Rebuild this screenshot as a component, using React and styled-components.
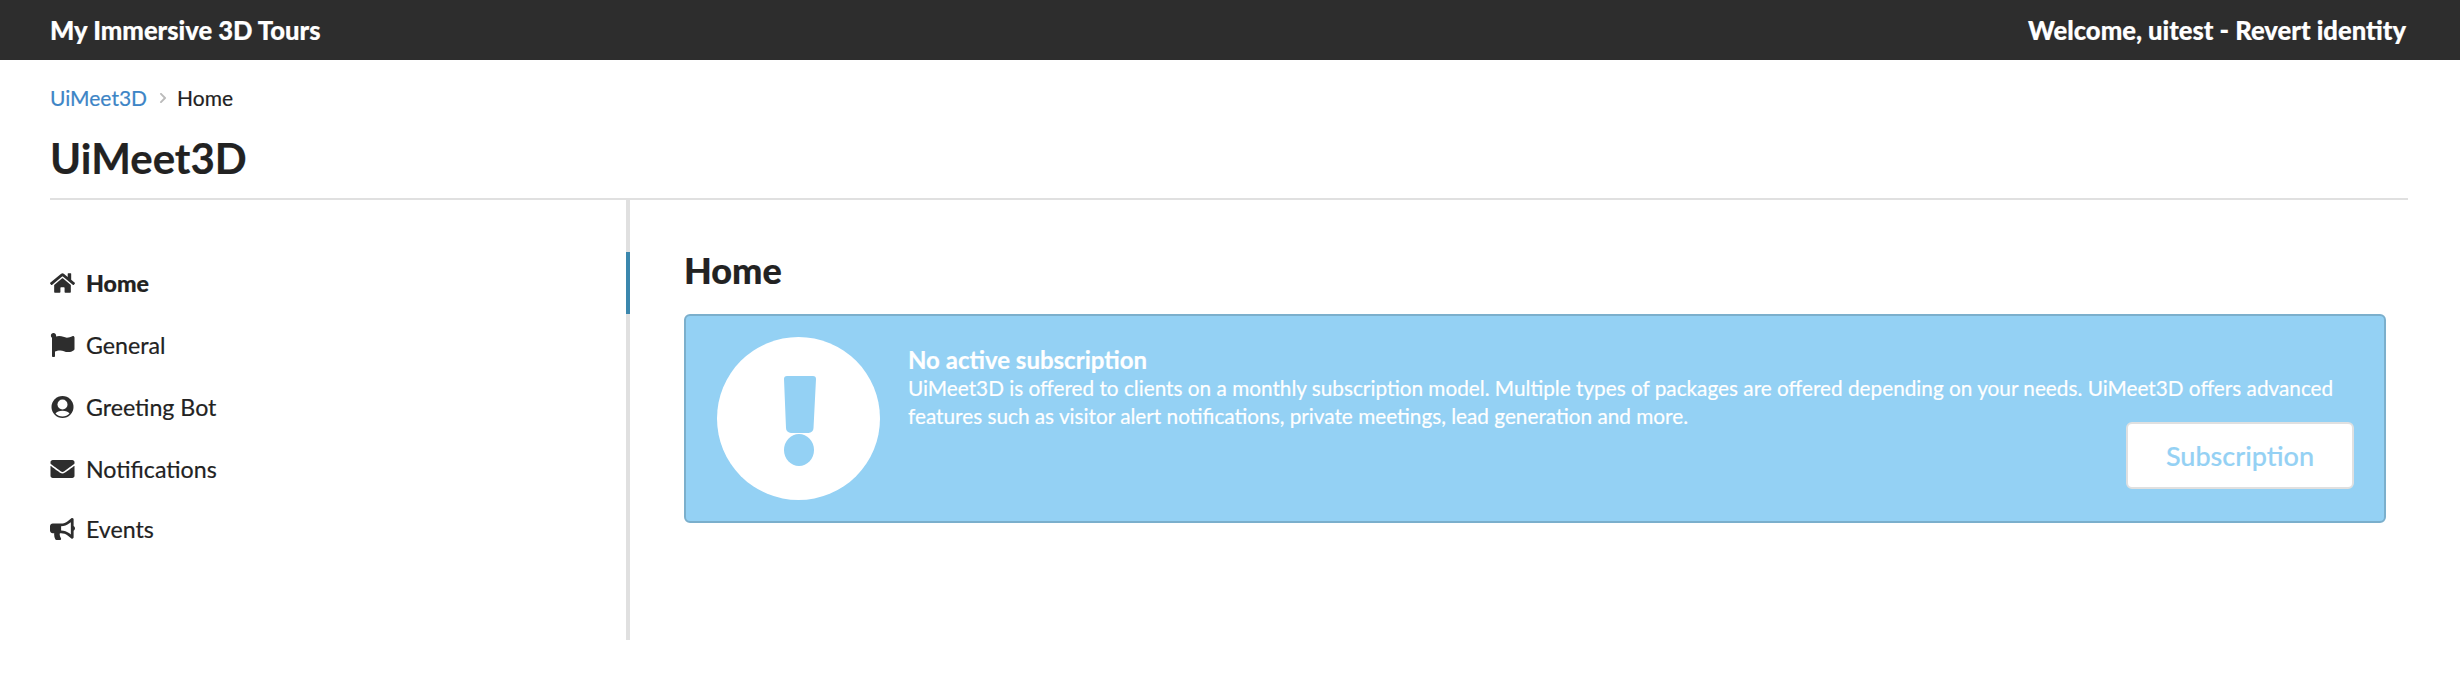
import React from 'react';
import styled, { createGlobalStyle } from 'styled-components';
import { FaHome, FaFlag, FaEnvelope, FaBullhorn, FaChevronRight } from 'react-icons/fa';

const GlobalStyle=createGlobalStyle`
  html, body {
    margin: 0;
    padding: 0;
    background: #fff;
  }
  body {
    font-family: Lato, "Liberation Sans", sans-serif;
    color: #222;
    -webkit-text-stroke: 0.2px currentColor;
  }
`;

const TopBar=styled.header`
  height: 60px;
  background: #2d2d2d;
  color: #fff;
  display: flex;
  justify-content: space-between;
  align-items: center;
  padding: 0 54px 0 50px;
  font-size: 25.6px;
  font-weight: 900;
`;

const PageHead=styled.div`
  margin: 0 52px 0 50px;
  padding-top: 26px;
  border-bottom: 2px solid #e0e0e0;
  height: 112px;
`;

const Breadcrumb=styled.nav`
  display: flex;
  align-items: center;
  font-size: 21px;
  line-height: 24px;
  color: #222;
`;

const Crumb=styled.a`
  color: #3d85c6;
  text-decoration: none;
`;

const Separator=styled(FaChevronRight)`
  width: 8px;
  height: 12px;
  color: #bbb;
  margin: 0 10px 0 12px;
`;

const SiteTitle=styled.h1`
  margin: 24px 0 0;
  font-size: 42px;
  line-height: 48px;
  font-weight: 700;
  color: #222;
`;

const Body=styled.div`
  display: flex;
  align-items: flex-start;
  margin-left: 50px;
  margin-right: 74px;
`;

const Side=styled.aside`
  position: relative;
  box-sizing: border-box;
  flex: none;
  width: 580px;
  height: 440px;
  border-right: 4px solid #e0e0e0;
  padding-top: 52px;
`;

const Marker=styled.span`
  position: absolute;
  right: -4px;
  top: 52px;
  width: 4px;
  height: 62px;
  background: #3b87ad;
`;

const NavItem=styled.a`
  display: flex;
  align-items: center;
  height: 62px;
  font-size: 23.2px;
  font-weight: ${props => (props.$active ? 900 : 400)};
  color: #222;
  &:last-child {
    height: 58px;
  }
  svg {
    width: 25px;
    height: 24px;
    margin-right: 11px;
    flex: none;
    color: #2d2d2d;
  }
`;

const Main=styled.main`
  flex: 1;
  padding-left: 54px;
`;

const Heading=styled.h2`
  margin: 48px 0 0;
  font-size: 36px;
  line-height: 44px;
  font-weight: 900;
  color: #222;
`;

const Alert=styled.section`
  box-sizing: border-box;
  height: 209px;
  margin-top: 22px;
  display: flex;
  background: #94d1f4;
  border: 2px solid #7bafcc;
  border-radius: 6px;
  padding: 21px 30px 0 31px;
  color: #fff;
`;

const AlertIcon=styled.svg`
  width: 163px;
  height: 163px;
  flex: none;
  margin-right: 28px;
`;

const AlertBody=styled.div`
  flex: 1;
  display: flex;
  flex-direction: column;
  padding-top: 9px;
  font-size: 20.75px;
  line-height: 28px;
`;

const AlertTitle=styled.strong`
  font-size: 24px;
  line-height: 28px;
  font-weight: 700;
`;

const SubscribeButton=styled.button`
  align-self: flex-end;
  margin-top: -8px;
  width: 228px;
  height: 67px;
  background: #fff;
  border: 2px solid #e0e0e0;
  border-radius: 6px;
  color: #94d1f4;
  font-family: inherit;
  font-size: 27px;
  font-weight: 500;
`;

// ring with a cut out head and a thin crescent for the shoulders
const BotIcon=() => (
  <svg viewBox="0 0 25 24">
    <circle cx="12.5" cy="12" r="11" fill="currentColor"/>
    <circle cx="12.5" cy="9.5" r="5" fill="#fff"/>
    <path d="M5.500 18.500c1.500-1.800 3.500-2.700 7-2.700s5.500.9 7 2.700c-1.800 1.900-4.200 3-7 3s-5.200-1.100-7-3z" fill="#fff"/>
  </svg>
);

const navItems=[
  { label: 'Home', Icon: FaHome, active: true },
  { label: 'General', Icon: FaFlag },
  { label: 'Greeting Bot', Icon: BotIcon },
  { label: 'Notifications', Icon: FaEnvelope },
  { label: 'Events', Icon: FaBullhorn }
];

export default function App(){
  return (
    <>
      <GlobalStyle/>
      <TopBar>
        <span>My Immersive 3D Tours</span>
        <span>Welcome, uitest - Revert identity</span>
      </TopBar>
      <PageHead>
        <Breadcrumb>
          <Crumb href="#">UiMeet3D</Crumb>
          <Separator/>
          <span>Home</span>
        </Breadcrumb>
        <SiteTitle>UiMeet3D</SiteTitle>
      </PageHead>
      <Body>
        <Side>
          <Marker/>
          {navItems.map(({ label, Icon, active }) => (
            <NavItem key={label} $active={active}>
              <Icon/>
              {label}
            </NavItem>
          ))}
        </Side>
        <Main>
          <Heading>Home</Heading>
          <Alert>
            <AlertIcon viewBox="0 0 163 163">
              <circle cx="81.5" cy="81.5" r="81.5" fill="#fff"/>
              <path d="M70 39h26a3 3 0 0 1 3 3l-2.500 49a5 5 0 0 1-5 5H74a5 5 0 0 1-5-5L67 42a3 3 0 0 1 3-3z" fill="#94d1f4"/>
              <ellipse cx="82" cy="113" rx="15" ry="16" fill="#94d1f4"/>
            </AlertIcon>
            <AlertBody>
              <AlertTitle>No active subscription</AlertTitle>
              <span>UiMeet3D is offered to clients on a monthly subscription model. Multiple types of packages are offered depending on your needs. UiMeet3D offers advanced features such as visitor alert notifications, private meetings, lead generation and more.</span>
              <SubscribeButton>Subscription</SubscribeButton>
            </AlertBody>
          </Alert>
        </Main>
      </Body>
    </>
  );
}
